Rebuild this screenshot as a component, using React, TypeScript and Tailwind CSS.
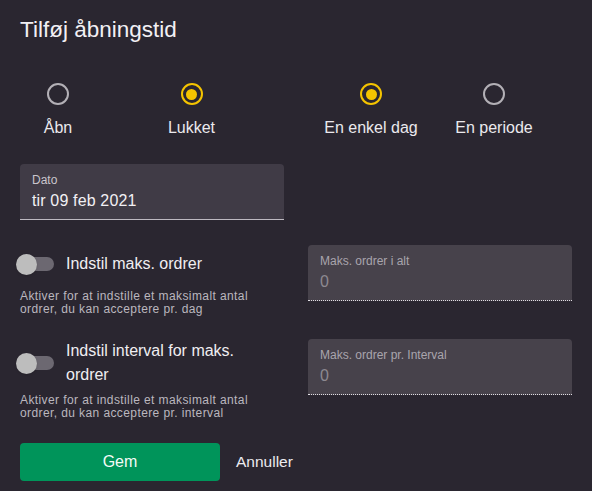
import React from "react";

function Radio({ checked }: { checked: boolean }) {
  return checked ? (
    <div className="flex h-[22px] w-[22px] items-center justify-center rounded-full border-2 border-[#f5c400]">
      <div className="h-[11px] w-[11px] rounded-full bg-[#f5c400]" />
    </div>
  ) : (
    <div className="h-[22px] w-[22px] rounded-full border-2 border-[#b3b0b6]" />
  );
}

function RadioItem({
  label,
  checked,
  width,
}: {
  label: string;
  checked: boolean;
  width: string;
}) {
  return (
    <div className={`flex flex-col items-center ${width}`}>
      <Radio checked={checked} />
      <span className="mt-[11px] text-[16px] leading-6 text-[#ebe9ed]">
        {label}
      </span>
    </div>
  );
}

function Toggle() {
  return (
    <div className="relative ml-[-12px] h-[38px] w-[58px] shrink-0">
      <div className="absolute left-[12px] top-[12px] h-[14px] w-[34px] rounded-full bg-[#6c6871]" />
      <div className="absolute left-[8px] top-[9px] h-[21px] w-[21px] rounded-full bg-[#bdbdbd] shadow" />
    </div>
  );
}

function ToggleBlock({ label, help }: { label: string; help: string }) {
  return (
    <div className="flex flex-col">
      <div className="flex min-h-[38px] items-center">
        <Toggle />
        <span className="max-w-[212px] text-[16px] leading-6 text-[#f0eef2]">
          {label}
        </span>
      </div>
      <p className="mt-[7px] text-[12px] leading-[12.5px] tracking-[0.4px] text-[#bbb7bf]">
        {help}
      </p>
    </div>
  );
}

function DisabledField({ label }: { label: string }) {
  return (
    <div className="h-[56px] rounded-t bg-[#47424b] px-3 pt-2 border-b border-dotted border-[#e0dde3]">
      <div className="text-[12px] leading-4 text-[#a9a5ad]">{label}</div>
      <div className="mt-px text-[16px] leading-6 text-[#8d8991]">0</div>
    </div>
  );
}

export default function App() {
  return (
    <div
      className="h-[491px] w-[592px] overflow-hidden bg-[#2a2630] px-5 pt-[18px]"
      style={{ fontFamily: '"Liberation Sans", Arial, sans-serif' }}
    >
      <h1 className="text-[22.5px] leading-6 text-[#f2f0f4]">
        Tilføj åbningstid
      </h1>

      {/* Radio groups */}
      <div className="mt-[41px] grid grid-cols-2 gap-x-6">
        <div className="flex">
          <RadioItem label="Åbn" checked={false} width="w-[76px]" />
          <RadioItem label="Lukket" checked={true} width="ml-[48px] w-[95px]" />
        </div>
        <div className="flex">
          <RadioItem label="En enkel dag" checked={true} width="w-[126px]" />
          <RadioItem label="En periode" checked={false} width="w-[120px]" />
        </div>
      </div>

      {/* Date field */}
      <div className="mt-6 w-[264px] rounded-t bg-[#403b46] px-3 pt-2 pb-[6px] border-b border-[#bdb9c1]">
        <div className="text-[12px] leading-4 text-[#c9c5cc]">Dato</div>
        <div className="mt-px text-[16px] leading-6 tracking-[0.15px] text-[#f2f0f4]">
          tir 09 feb 2021
        </div>
      </div>

      {/* Max order settings */}
      <div className="mt-[25px] grid grid-cols-2 items-start gap-x-6 gap-y-6">
        <ToggleBlock
          label="Indstil maks. ordrer"
          help="Aktiver for at indstille et maksimalt antal ordrer, du kan acceptere pr. dag"
        />
        <DisabledField label="Maks. ordrer i alt" />
        <ToggleBlock
          label="Indstil interval for maks. ordrer"
          help="Aktiver for at indstille et maksimalt antal ordrer, du kan acceptere pr. interval"
        />
        <DisabledField label="Maks. ordrer pr. Interval" />
      </div>

      {/* Actions */}
      <div className="mt-6 flex items-center gap-4">
        <button className="h-[38px] w-[200px] rounded bg-[#00945a] text-[16px] font-normal text-[#f4fbf7]">
          Gem
        </button>
        <button className="text-[15.5px] font-normal text-[#ecebef]">
          Annuller
        </button>
      </div>
    </div>
  );
}
